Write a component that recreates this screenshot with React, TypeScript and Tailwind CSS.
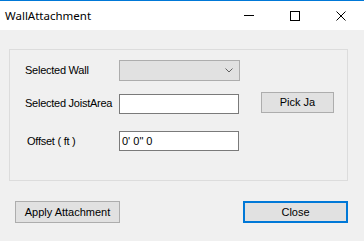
export default function App() {
  const label = "w-[109px] shrink-0 pl-[15px] whitespace-nowrap text-[11px] tracking-[-0.25px] leading-none text-black";
  const win = { fontFamily: '"Liberation Sans", Arial, sans-serif' };

  return (
    <div className="w-[364px] h-[241px] flex flex-col bg-[#f0f0f0] overflow-hidden" style={win}>
      {/* Title bar */}
      <div className="h-[30px] shrink-0 flex items-center bg-white border-t border-[#0078d7]">
        <span
          className="pl-[5px] text-[11.5px] text-black"
          style={{ fontFamily: '"Noto Sans", "Open Sans", sans-serif' }}
        >
          WallAttachment
        </span>
        <div className="ml-auto flex items-center h-full">
          <div className="w-[46px] h-full flex items-center justify-center">
            <div className="w-[10px] h-px bg-black" />
          </div>
          <div className="w-[46px] h-full flex items-center justify-center">
            <div className="w-[10px] h-[10px] border border-black" />
          </div>
          <div className="w-[46px] h-full flex items-center justify-center">
            <svg width="10" height="10" viewBox="0 0 10 10">
              <path d="M0.5 0.5 L9.5 9.5 M9.5 0.5 L0.5 9.5" stroke="#000" strokeWidth="1" />
            </svg>
          </div>
        </div>
      </div>

      {/* Client area */}
      <div className="flex-1 flex flex-col">
        {/* Group box */}
        <div className="mt-[19px] ml-[9px] w-[339px] h-[132px] border border-[#dcdcdc] flex flex-col">
          {/* Selected Wall */}
          <div className="mt-[10px] h-[21px] flex items-center">
            <span className={label}>Selected Wall</span>
            <div className="w-[121px] h-[21px] bg-[#e1e1e1] border border-[#adadad] flex items-center justify-end pr-[6px]">
              <svg width="8" height="5" viewBox="0 0 8 5">
                <path d="M0.5 0.5 L4 4 L7.5 0.5" fill="none" stroke="#606060" strokeWidth="1" />
              </svg>
            </div>
          </div>

          {/* Selected JoistArea */}
          <div className="mt-[11px] h-[22px] flex items-start">
            <span className={label + " mt-[6px]"}>Selected JoistArea</span>
            <div className="mt-[2px] w-[120px] h-[20px] bg-white border border-[#7a7a7a]" />
            <button className="ml-[22px] w-[73px] h-[21px] bg-[#e1e1e1] border border-[#adadad] text-[11px] leading-none text-black">
              Pick Ja
            </button>
          </div>

          {/* Offset */}
          <div className="mt-[17px] h-[20px] flex items-center">
            <span className={label + " pl-[17px]"}>Offset ( ft )</span>
            <div className="w-[120px] h-[20px] bg-white border border-[#7a7a7a] flex items-center pl-[2px] text-[11px] leading-none text-black">
              0' 0" 0
            </div>
          </div>
        </div>

        {/* Bottom buttons */}
        <div className="mt-[20px] flex">
          <button className="ml-[15px] w-[105px] h-[22px] bg-[#e1e1e1] border border-[#adadad] text-[11px] leading-none text-black">
            Apply Attachment
          </button>
          <button className="ml-[123px] w-[105px] h-[22px] bg-[#e1e1e1] border-2 border-[#0078d7] text-[11px] leading-none text-black">
            Close
          </button>
        </div>
      </div>
    </div>
  );
}
